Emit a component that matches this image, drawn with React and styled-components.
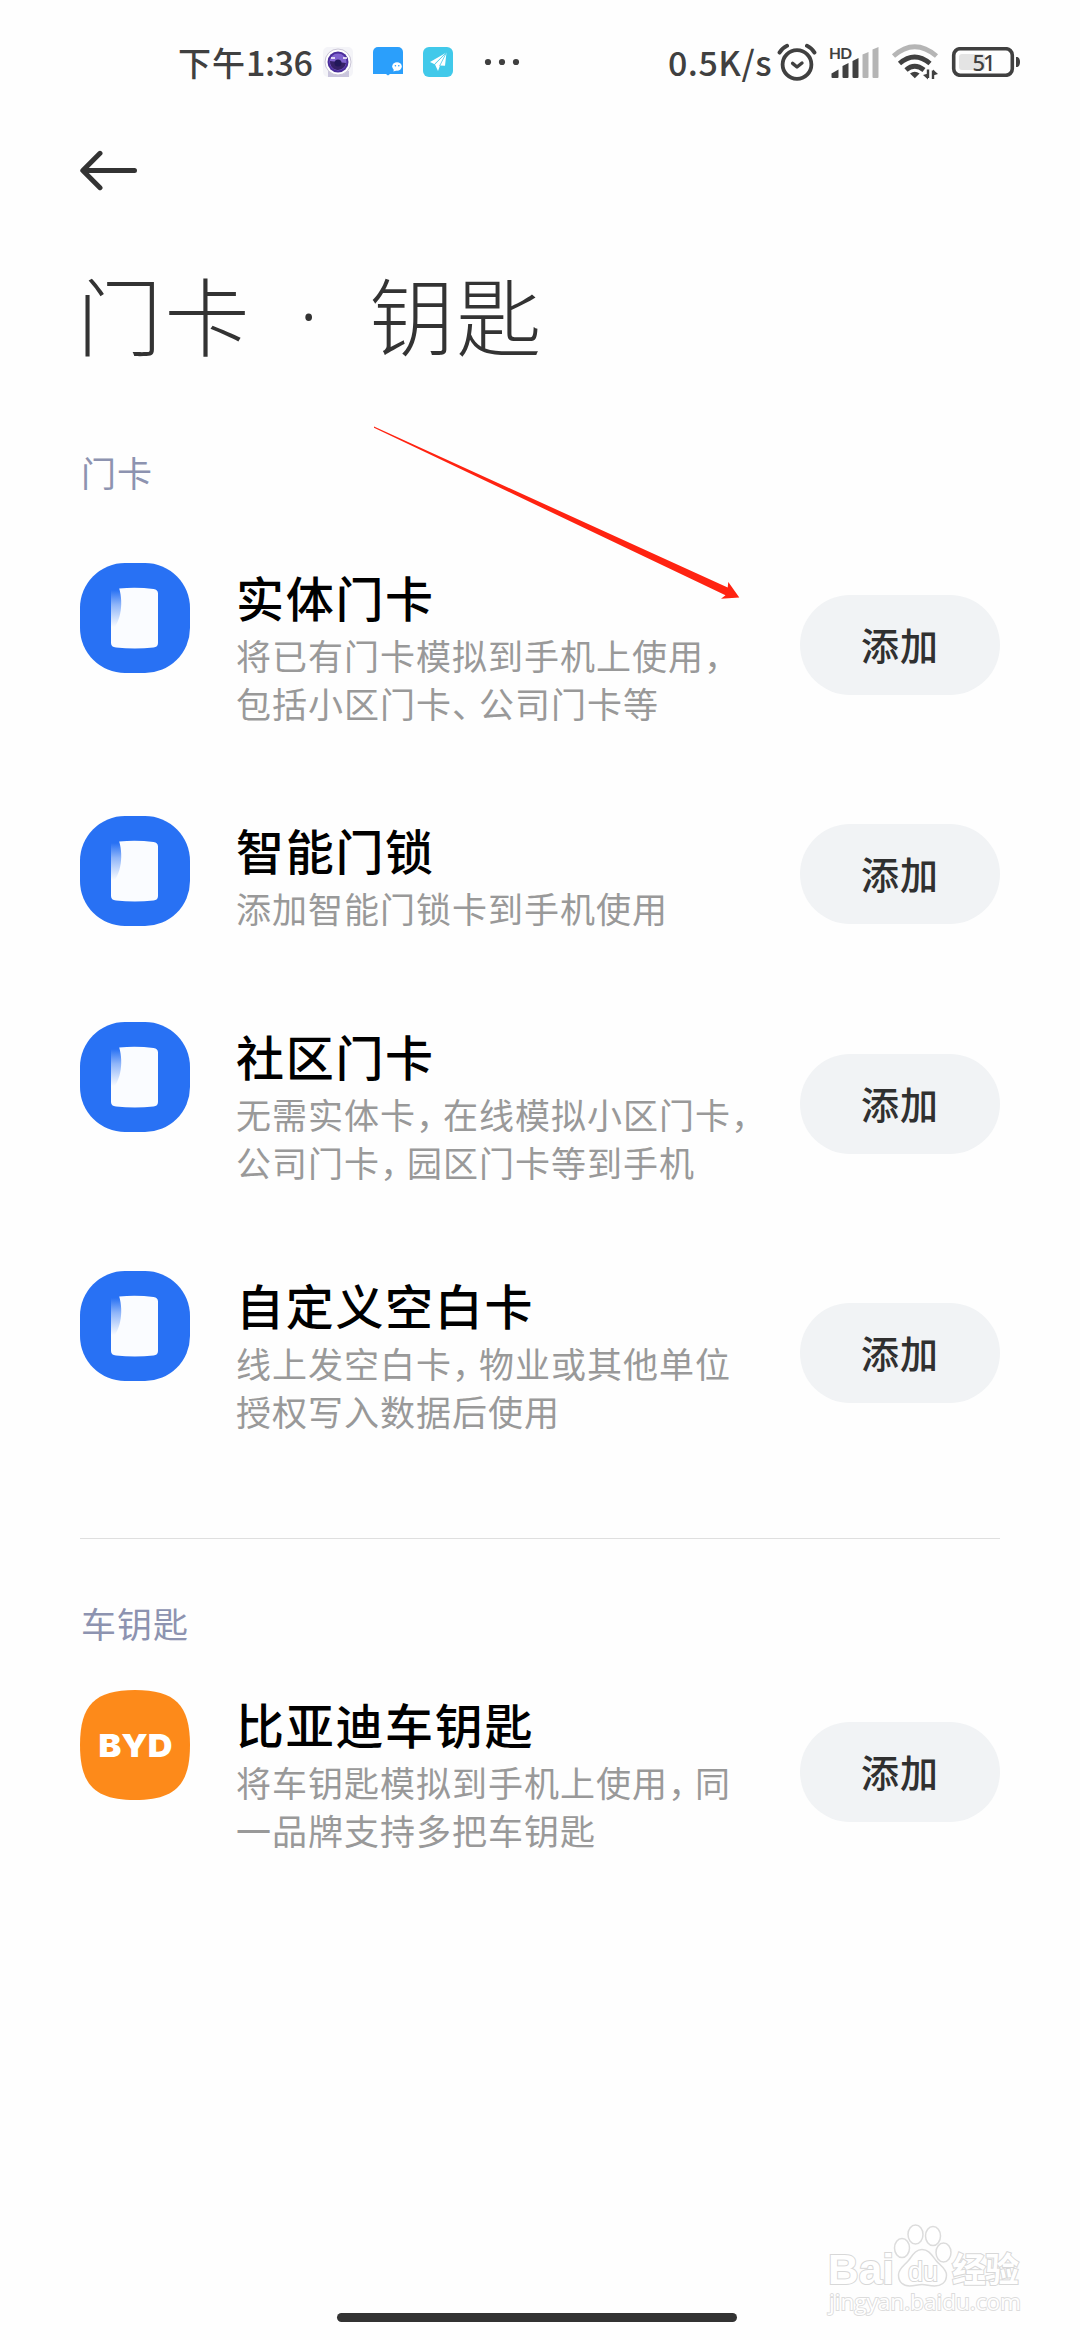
import React from "react";
import styled, { createGlobalStyle } from "styled-components";

const DOOR_CARDS = [
  {
    name: "实体门卡",
    lines: ["将已有门卡模拟到手机上使用，", "包括小区门卡、公司门卡等"],
    space: 89,
  },
  { name: "智能门锁", lines: ["添加智能门锁卡到手机使用"], space: 90 },
  {
    name: "社区门卡",
    lines: ["无需实体卡，在线模拟小区门卡，", "公司门卡，园区门卡等到手机"],
    space: 85,
  },
  {
    name: "自定义空白卡",
    lines: ["线上发空白卡，物业或其他单位", "授权写入数据后使用"],
    space: 103,
  },
];

const CAR_KEYS = [
  {
    name: "比亚迪车钥匙",
    lines: ["将车钥匙模拟到手机上使用，同", "一品牌支持多把车钥匙"],
    space: 0,
  },
];

const CameraIcon = () => (
  <svg width="30" height="30" viewBox="0 0 30 30">
    <rect width="30" height="30" rx="5" fill="#f4f4f8" />
    <path d="M5 24h21v6H5z" fill="#c9c5dc" />
    <circle cx="15" cy="15" r="13" fill="#fff" stroke="#c9c4d6" />
    <circle cx="15" cy="15" r="10.5" fill="#4a2d9a" />
    <circle cx="15" cy="15" r="8.5" fill="#8062cf" />
    <path d="M7 14a8 8 0 0 0 16 2z" fill="#352067" />
    <circle cx="15" cy="16" r="3.5" fill="#22185a" />
    <path d="M8 11h4M20 11h4" stroke="#fff" strokeWidth="1.6" />
  </svg>
);

const ChatIcon = () => (
  <svg width="30" height="30" viewBox="0 0 30 30">
    <rect width="30" height="27" rx="5" fill="#2b9ffb" />
    <path d="M0 20h30v7H17l-2 1.6L13 27H0z" fill="#2b9ffb" />
    <ellipse cx="24" cy="19.5" rx="4.8" ry="4.2" fill="#fff" />
    <path d="M21 22l-.6 2.6 3-1z" fill="#fff" />
    <circle cx="22.4" cy="18.8" r=".8" fill="#2b9ffb" />
    <circle cx="25.8" cy="18.8" r=".8" fill="#2b9ffb" />
  </svg>
);

const PlaneIcon = () => (
  <svg width="30" height="30" viewBox="0 0 30 30">
    <rect width="30" height="30" rx="6" fill="#41c9ea" />
    <path d="M23.5 5.5L7 15l4.6 2.2z" fill="#fff" />
    <path d="M23.5 5.5L12 17.6l3 6.4 2-5.4 5 .2z" fill="#fff" />
    <path d="M23.5 5.5L11.6 17.2M23.5 5.5L16.6 19" stroke="#41c9ea" strokeWidth=".8" />
  </svg>
);

const MoreIcon = () => (
  <svg width="36" height="8" viewBox="0 0 36 8" fill="#404040">
    <circle cx="4" cy="4" r="3.1" />
    <circle cx="18" cy="4" r="3.1" />
    <circle cx="32" cy="4" r="3.1" />
  </svg>
);

const AlarmIcon = () => (
  <svg
    width="40"
    height="38"
    viewBox="0 0 40 38"
    fill="none"
    stroke="#404040"
    strokeWidth="3.8"
    strokeLinecap="round"
    strokeLinejoin="round"
  >
    <circle cx="20" cy="21.5" r="14.4" />
    <path d="M15.6 20.4l4.4 3.6 5-4" strokeWidth="3.4" />
    <path d="M2.6 9.6Q5.2 5 10 2.8M37.4 9.6Q34.8 5 30 2.8" strokeWidth="4" />
  </svg>
);

const SignalIcon = () => (
  <svg width="50" height="38" viewBox="828 43 50 38" fill="#404040">
    <text
      x="828"
      y="58.5"
      fontSize="15.5"
      fontWeight="700"
      textLength="23"
      fontFamily="Lato, sans-serif"
    >
      HD
    </text>
    <path d="M830.5 77v-3.5l7-4V77a1 1 0 0 1-1 1h-5a1 1 0 0 1-1-1z" />
    <path d="M841.5 77V66l6-3v14a1 1 0 0 1-1 1h-4a1 1 0 0 1-1-1z" />
    <path d="M851.5 77V61l6-3v19a1 1 0 0 1-1 1h-4a1 1 0 0 1-1-1z" />
    <path d="M861.5 77V54.5l6-2.5v25a1 1 0 0 1-1 1h-4a1 1 0 0 1-1-1z" fill="#b5b5b5" />
    <path d="M871.5 77V49.5l6-2.5v30a1 1 0 0 1-1 1h-4a1 1 0 0 1-1-1z" fill="#b5b5b5" />
  </svg>
);

const WifiIcon = () => (
  <svg width="48" height="36" viewBox="890 45 48 36" fill="none" stroke="#404040">
    <path d="M892.5 57Q913.5 38.5 935.5 57" stroke="#b5b5b5" strokeWidth="4.8" />
    <path d="M898.5 64.5Q913.5 51.5 929 64.5" strokeWidth="4.8" />
    <path d="M905 71Q913.5 63.5 923 71" strokeWidth="4.8" />
    <path d="M909 74.5q4.8-3.5 9.6 0l-4.8 4.7z" fill="#404040" stroke="none" />
    <path d="M927 70.5V79M932 80v-8.5" strokeWidth="2.4" />
    <path d="M922 76l5 4.5v-6zM937 75l-5-4.5v6z" fill="#404040" stroke="none" />
  </svg>
);

const BatteryIcon = () => (
  <svg width="70" height="30" viewBox="951 47 70 30">
    <rect x="953.7" y="48.7" width="58.6" height="26.6" rx="6.5" fill="none" stroke="#404040" strokeWidth="3.6" />
    <rect x="959" y="54" width="26" height="16" rx="3" fill="#e4e4e4" />
    <path d="M1016 57h1.5q2.5 1 2.5 5t-2.5 5h-1.5z" fill="#404040" />
    <text
      x="972.5"
      y="70.5"
      fontSize="22"
      fontWeight="500"
      textLength="23"
      fill="#404040"
      fontFamily="Noto Sans, sans-serif"
    >
      51
    </text>
  </svg>
);

const BackIcon = () => (
  <svg
    width="58"
    height="42"
    viewBox="0 0 58 42"
    fill="none"
    stroke="#333"
    strokeWidth="5"
    strokeLinecap="round"
    strokeLinejoin="round"
  >
    <path d="M3 20.5h51.500M20 3.300L2.800 20.500 20 37.700" />
  </svg>
);

const CardIcon = () => (
  <svg width="110" height="110" viewBox="0 0 110 110">
    <defs>
      <linearGradient id="fold" x1="0" y1="27" x2="0" y2="64" gradientUnits="userSpaceOnUse">
        <stop offset="0" stopColor="#2871f4" />
        <stop offset="0.4" stopColor="#8fb5f9" />
        <stop offset="1" stopColor="#fafcff" />
      </linearGradient>
    </defs>
    <rect width="110" height="110" rx="45" fill="#2871f4" />
    <path d="M31 27h12v42H31z" fill="url(#fold)" />
    <path
      d="M39.2 25.5Q57 24 73.5 26 78 26.5 78 30.5V80Q78 84 73.5 84.5 55 86.3 36 84.5 31 84 31 80V68C40 61 44 42 39.2 25.5z"
      fill="#fafcff"
    />
  </svg>
);

const BydIcon = () => (
  <svg width="110" height="110" viewBox="0 0 110 110">
    <path
      d="M55 0C95 0 110 15 110 55S95 110 55 110 0 95 0 55 15 0 55 0z"
      fill="#fd8a1a"
    />
    <text
      x="18.5"
      y="67"
      fill="#fff"
      fontSize="32"
      fontWeight="900"
      fontFamily="Inter, sans-serif"
      textLength="74"
      lengthAdjust="spacingAndGlyphs"
    >
      BYD
    </text>
  </svg>
);

// the comma and 、 take less room than a whole character here
const Line = ({ text }) => (
  <DescLine>
    {text
      .split(/([，、])/)
      .map((part, i) => (i % 2 ? <Punct key={i}>{part}</Punct> : part))}
  </DescLine>
);

const CardRow = ({ card, icon }) => (
  <Row $space={card.space}>
    {icon}
    <Info>
      <Name>{card.name}</Name>
      {card.lines.map((line) => (
        <Line key={line} text={line} />
      ))}
    </Info>
    <AddButton>添加</AddButton>
  </Row>
);

const Watermark = () => (
  <WatermarkSvg width="220" height="120" viewBox="820 2210 220 120">
    <g fill="#fff" stroke="#dcdcdc" strokeWidth="1.5">
      <ellipse cx="902" cy="2248" rx="7.5" ry="9.5" />
      <ellipse cx="915.5" cy="2234.5" rx="7.5" ry="9.5" />
      <ellipse cx="933" cy="2236" rx="7.5" ry="9.5" />
      <ellipse cx="943.5" cy="2252.5" rx="7.5" ry="9.5" />
      <path d="M922 2249.5c7 0 10 6 14 11s10.500 8 10.500 14.500c0 8-6 11-12 11-5 0-8-1.500-12.500-1.500s-7.500 1.500-12.500 1.500c-6 0-11-3.500-11-11 0-6.500 6-9.500 10-14.500s7-11 13.500-11z" />
    </g>
    <g fill="#fff" stroke="#d8d8d8" strokeWidth="2" paintOrder="stroke" fontWeight="700">
      <text x="828" y="2284" fontSize="43" textLength="66" lengthAdjust="spacingAndGlyphs" fontFamily="Liberation Sans, sans-serif">
        Bai
      </text>
      <text x="908" y="2280.5" fontSize="27" fontWeight="400" textLength="30" fontFamily="Liberation Sans, sans-serif">
        du
      </text>
      <text x="952" y="2281.5" fontSize="34" textLength="67" fontFamily="Noto Sans CJK SC, sans-serif">
        经验
      </text>
      <text
        x="829"
        y="2310"
        fontSize="22"
        fontWeight="400"
        stroke="#dcdcdc"
        strokeWidth="1.8"
        textLength="192"
        lengthAdjust="spacingAndGlyphs"
        fontFamily="Open Sans, sans-serif"
      >
        jingyan.baidu.com
      </text>
    </g>
  </WatermarkSvg>
);

const App = () => {
  return (
    <Page>
      <GlobalStyle />
      <StatusBar>
        <Clock>
          下午<ClockDigits>1:36</ClockDigits>
        </Clock>
        <AppIcons>
          <CameraIcon />
          <ChatIcon />
          <PlaneIcon />
        </AppIcons>
        <MoreIcon />
        <StatusRight>
          <Speed>0.5K/s</Speed>
          <AlarmIcon />
          <SignalIcon />
          <WifiIcon />
          <BatteryIcon />
        </StatusRight>
      </StatusBar>
      <BackBar>
        <BackIcon />
      </BackBar>
      <Title>
        门卡<Dot>·</Dot>钥匙
      </Title>
      <Content>
        <SectionLabel $top={38} $bottom={67}>
          门卡
        </SectionLabel>
        {DOOR_CARDS.map((card) => (
          <CardRow key={card.name} card={card} icon={<CardIcon />} />
        ))}
        <Divider />
        <SectionLabel $top={60} $bottom={43}>
          车钥匙
        </SectionLabel>
        {CAR_KEYS.map((card) => (
          <CardRow key={card.name} card={card} icon={<BydIcon />} />
        ))}
      </Content>
      <HomeBar />
      <PointerSvg width="370" height="176" viewBox="372 425 370 176">
        <path d="M374 426.5L727.7 587.5 728.3 582 739.3 597.6 721 598.8 725.5 595.3 374 427.7z" fill="#ff2311" />
      </PointerSvg>
      <Watermark />
    </Page>
  );
};

const GlobalStyle = createGlobalStyle`
  body {
    margin: 0;
    background: #fefefe;
    font-family: "Noto Sans CJK SC", sans-serif;
  }

  svg {
    display: block;
    flex-shrink: 0;
  }
`;

const Page = styled.div`
  position: relative;
  display: flex;
  flex-direction: column;
  width: 1080px;
  height: 2340px;
  overflow: hidden;
  background: #fefefe;
`;

const StatusBar = styled.div`
  display: flex;
  align-items: center;
  height: 124px;
  padding: 0 59px 0 178px;
  color: #404040;
`;

const Clock = styled.div`
  width: 145px;
  font-size: 33px;
  font-weight: 500;
  letter-spacing: 1px;
  line-height: 40px;
  white-space: nowrap;
`;

const ClockDigits = styled.span`
  font-size: 34px;
  letter-spacing: -0.5px;
`;

const AppIcons = styled.div`
  display: flex;
  gap: 20px;
  margin-right: 31px;
`;

const StatusRight = styled.div`
  display: flex;
  align-items: center;
  gap: 12px;
  margin-left: auto;
`;

const Speed = styled.div`
  margin-right: -7px;
  font-size: 34px;
  font-weight: 500;
  letter-spacing: 0.5px;
  line-height: 40px;
`;

const BackBar = styled.div`
  display: flex;
  align-items: center;
  height: 93px;
  padding-left: 80px;
`;

const Title = styled.div`
  display: flex;
  height: 193px;
  padding-left: 77px;
  color: #333;
  font-size: 85px;
  font-weight: 300;
  letter-spacing: 2.5px;
  line-height: 191px;
  white-space: nowrap;
`;

const Dot = styled.span`
  box-sizing: border-box;
  width: 117px;
  padding-right: 4px;
  text-align: center;
  font-family: "Open Sans", sans-serif;
  font-weight: 300;
  letter-spacing: 0;
`;

const Content = styled.div`
  padding: 0 80px;
`;

const SectionLabel = styled.div`
  padding: ${({ $top, $bottom }) => `${$top}px 0 ${$bottom}px 1px`};
  color: #8d93b0;
  font-size: 35px;
  letter-spacing: 1px;
  line-height: 48px;
`;

const Row = styled.div`
  display: flex;
  align-items: flex-start;
  margin-bottom: ${({ $space }) => $space}px;
`;

const Info = styled.div`
  flex: 1;
  margin-left: 46px;
  white-space: nowrap;
`;

const Name = styled.div`
  padding-bottom: 2px;
  color: #000;
  font-size: 48px;
  font-weight: 500;
  letter-spacing: 1.7px;
  line-height: 66px;
`;

const DescLine = styled.div`
  color: #999;
  font-size: 35px;
  letter-spacing: 1px;
  line-height: 48px;
`;

const Punct = styled.span`
  margin-right: 8.5px;
  font-feature-settings: "halt";
`;

const AddButton = styled.button`
  align-self: center;
  width: 200px;
  height: 100px;
  padding: 0 0 3px;
  border: none;
  border-radius: 50px;
  background: #f1f3f5;
  color: #303030;
  font-family: inherit;
  font-size: 38px;
  font-weight: 500;
  letter-spacing: 1px;
`;

const Divider = styled.div`
  height: 1px;
  background: #dfdfdf;
`;

const HomeBar = styled.div`
  width: 400px;
  height: 9px;
  margin: auto auto 18px 337px;
  border-radius: 5px;
  background: #333;
`;

const PointerSvg = styled.svg`
  position: absolute;
  left: 372px;
  top: 425px;
`;

const WatermarkSvg = styled.svg`
  position: absolute;
  left: 820px;
  top: 2210px;
`;

export default App;
